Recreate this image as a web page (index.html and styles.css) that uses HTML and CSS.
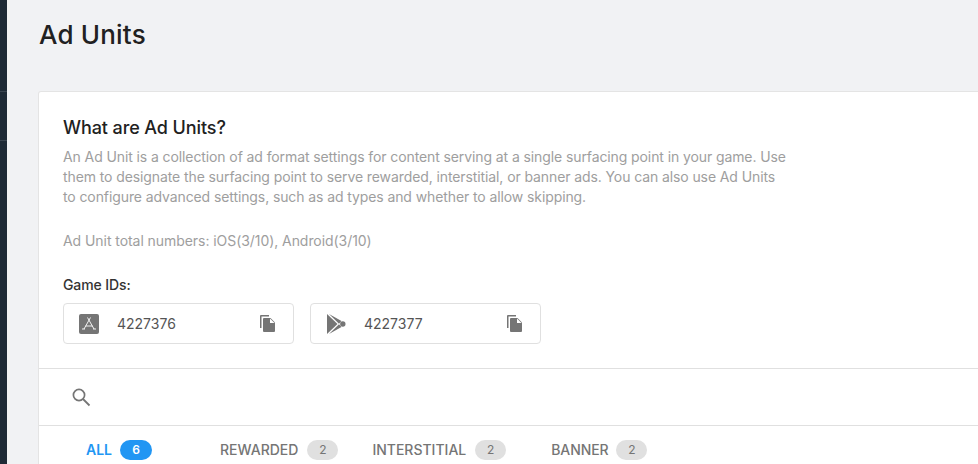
FILE: index.html

```html
<!DOCTYPE html>
<html lang="en">
<head>
    <meta charset="UTF-8">
    <title>Ad Units</title>
    <link rel="stylesheet" href="styles.css">
</head>
<body>
    <div class="sidebar">
        <div class="side-block first"></div>
        <div class="side-block second"></div>
    </div>
    <div class="main">
        <h1>Ad Units</h1>
        <div class="card">
            <div class="intro">
                <h2>What are Ad Units?</h2>
                <p class="desc">An Ad Unit is a collection of ad format settings for content serving at a single surfacing point in your game. Use them to designate the surfacing point to serve rewarded, interstitial, or banner ads. You can also use Ad Units to configure advanced settings, such as ad types and whether to allow skipping.</p>
                <p class="totals">Ad Unit total numbers: iOS(3/10), Android(3/10)</p>
                <div class="ids-label">Game IDs:</div>
                <div class="ids">
                    <div class="id-box">
                        <svg class="store-icon" width="20" height="20" viewBox="0 0 20 20">
                            <rect width="20" height="20" rx="2" fill="#757575"/>
                            <path d="M11.500 3.500 5 15M8.500 3.500 15 15M6.500 12h7M3 15h3M14 15h3" fill="none" stroke="#fff" stroke-width="0.900"/>
                        </svg>
                        <span class="id-num">4227376</span>
                        <svg class="copy-icon" width="18" height="18" viewBox="0 0 18 18">
                            <path d="M2 0h8v1.500H2.500V13H1V1a1 1 0 0 1 1-1z" fill="#757575"/>
                            <path d="M5 3h6.500L16 7.500V16a1 1 0 0 1-1 1H5a1 1 0 0 1-1-1V4a1 1 0 0 1 1-1z" fill="#757575"/>
                            <path d="M11 3.500V8h4.500z" fill="#fff"/>
                        </svg>
                    </div>
                    <div class="id-box">
                        <svg class="store-icon" width="20" height="20" viewBox="0 0 20 20">
                            <path d="M1 0 11.500 10 1 20z" fill="#757575"/>
                            <path d="M3 0 15.500 7 13 9.800zM3 20 15.500 13 13 10.200z" fill="#757575"/>
                            <circle cx="16.800" cy="10" r="2.700" fill="#757575"/>
                        </svg>
                        <span class="id-num">4227377</span>
                        <svg class="copy-icon" width="18" height="18" viewBox="0 0 18 18">
                            <path d="M2 0h8v1.500H2.500V13H1V1a1 1 0 0 1 1-1z" fill="#757575"/>
                            <path d="M5 3h6.500L16 7.500V16a1 1 0 0 1-1 1H5a1 1 0 0 1-1-1V4a1 1 0 0 1 1-1z" fill="#757575"/>
                            <path d="M11 3.500V8h4.500z" fill="#fff"/>
                        </svg>
                    </div>
                </div>
            </div>
            <div class="search">
                <svg width="20" height="20" viewBox="0 0 20 20">
                    <circle cx="8" cy="8" r="5.600" fill="none" stroke="#757575" stroke-width="1.700"/>
                    <path d="M12 12l6.500 6.500" fill="none" stroke="#757575" stroke-width="1.800"/>
                </svg>
            </div>
            <div class="tabs">
                <div class="tab tab-active">ALL <span class="count">6</span></div>
                <div class="tab tab-rewarded">REWARDED <span class="count">2</span></div>
                <div class="tab tab-inter">INTERSTITIAL <span class="count">2</span></div>
                <div class="tab tab-banner">BANNER <span class="count">2</span></div>
            </div>
        </div>
    </div>
</body>
</html>
```

FILE: styles.css

```css
html, body {
    height: 100%;
}
body {
    margin: 0;
    display: flex;
    overflow: hidden;
    background-color: #f1f2f4;
    font-family: Inter, "Liberation Sans", sans-serif;
    color: #212121;
}
.sidebar {
    width: 7px;
    flex-shrink: 0;
    background-color: #1e2a36;
}
.side-block {
    border-bottom: 1px solid #3a4550;
}
.first {
    height: 91px;
}
.second {
    height: 48px;
}
.main {
    flex: 1;
    min-width: 0;
    padding-left: 31px;
}
h1 {
    margin: 0;
    padding: 18px 0 0 1px;
    height: 91px;
    box-sizing: border-box;
    font-size: 26px;
    line-height: 34px;
    font-weight: 500;
    letter-spacing: 0.2px;
}
.card {
    width: 1000px;
    height: 373px;
    box-sizing: border-box;
    background-color: #fff;
    border: 1px solid #e4e4e4;
    border-bottom: 0;
    border-radius: 3px 3px 0 0;
}
.intro {
    height: 277px;
    box-sizing: border-box;
    padding: 24px 24px 0;
    border-bottom: 1px solid #e0e0e0;
}
h2 {
    margin: 0;
    font-size: 18px;
    line-height: 24px;
    font-weight: 500;
    letter-spacing: -0.1px;
}
.desc, .totals {
    margin: 0;
    font-size: 14px;
    line-height: 20px;
    letter-spacing: -0.06px;
    color: #9e9e9e;
}
.desc {
    margin-top: 7px;
    width: 725px;
    letter-spacing: -0.1px;
}
.totals {
    margin-top: 24px;
}
.ids-label {
    margin-top: 24px;
    font-size: 14px;
    line-height: 20px;
    font-weight: 500;
    letter-spacing: -0.1px;
    color: #333;
}
.ids {
    display: flex;
    gap: 16px;
    margin-top: 8px;
}
.id-box {
    width: 231px;
    height: 41px;
    box-sizing: border-box;
    display: flex;
    align-items: center;
    padding: 0 16px 0 15px;
    border: 1px solid #e0e0e0;
    border-radius: 4px;
}
.id-num {
    flex: 1;
    margin-left: 18px;
    font-size: 14px;
    color: #555;
}
.search {
    height: 57px;
    box-sizing: border-box;
    padding: 18px 0 0 32px;
    border-bottom: 1px solid #e0e0e0;
}
.tabs {
    display: flex;
    padding: 14px 0 0 47px;
}
.tab {
    display: flex;
    align-items: center;
    gap: 9px;
    font-size: 14px;
    line-height: 20px;
    font-weight: 500;
    color: #757575;
    margin-right: 45px;
}
.tab-active {
    gap: 8px;
    color: #2196f3;
    font-weight: 600;
    margin-right: 68px;
}
.tab-rewarded {
    margin-right: 34px;
}
.tab-banner {
    gap: 8px;
    letter-spacing: -0.1px;
}
.count {
    width: 31px;
    height: 20px;
    border-radius: 10px;
    background-color: #e0e0e0;
    text-align: center;
    font-size: 12px;
    font-weight: 400;
}
.tab-active .count {
    width: 32px;
    background-color: #2196f3;
    color: #fff;
    font-weight: 600;
}
```
